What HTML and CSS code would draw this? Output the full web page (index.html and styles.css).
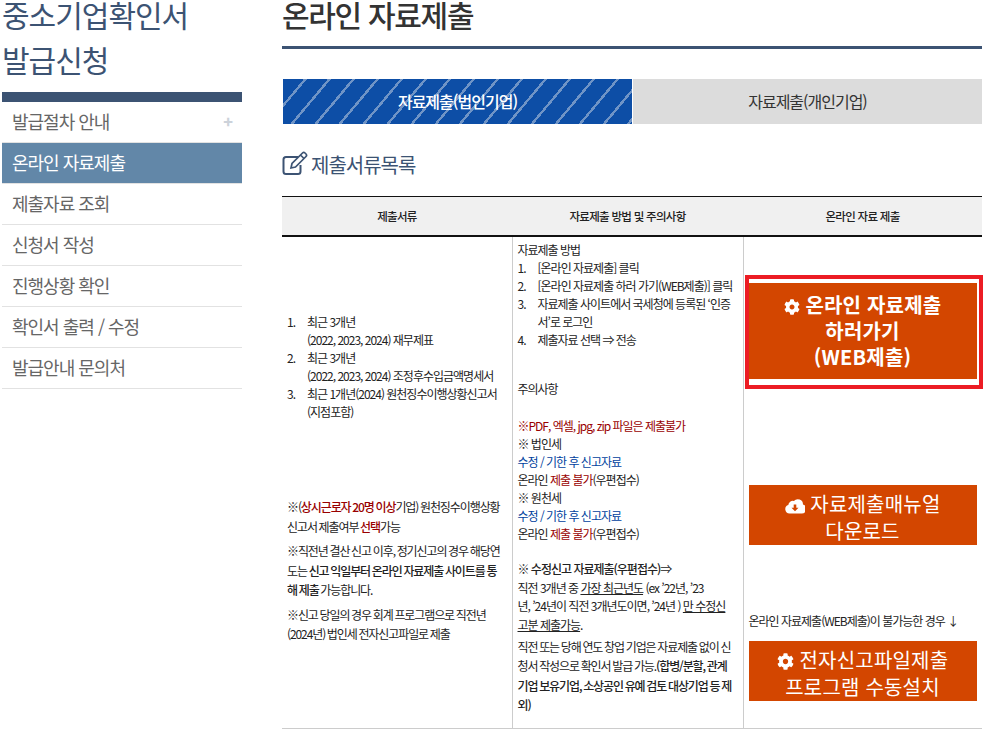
FILE: index.html
```html
<!DOCTYPE html>
<html lang="ko">

<head>
    <meta charset="UTF-8">
    <title>온라인 자료제출</title>
    <link rel="stylesheet" href="styles.css">
</head>

<body>
    <div class="wrap">
        <div class="side">
            <h2 class="sideTitle">중소기업확인서<br>발급신청</h2>
            <ul class="sideNav">
                <li><a>발급절차 안내</a><span class="plus">+</span></li>
                <li class="on"><a>온라인 자료제출</a></li>
                <li><a>제출자료 조회</a></li>
                <li><a>신청서 작성</a></li>
                <li><a>진행상황 확인</a></li>
                <li><a>확인서 출력 / 수정</a></li>
                <li><a>발급안내 문의처</a></li>
            </ul>
        </div>
        <div class="main">
            <h1 class="pageTitle">온라인 자료제출</h1>
            <div class="tabs">
                <a class="tab active">자료제출(법인기업)</a>
                <a class="tab">자료제출(개인기업)</a>
            </div>
            <h3 class="subTitle">
                <svg class="editIcon" width="26" height="24" viewBox="0 0 26 24" fill="none" stroke="#3c5373" stroke-width="2">
                    <path d="M16 6H4a2.500 2.500 0 0 0-2.500 2.500v12A2.500 2.500 0 0 0 4 23h12a2.500 2.500 0 0 0 2.500-2.500V14"/>
                    <path stroke-width="1.700" d="M9 17l1-4.500L20.500 2a1.800 1.800 0 0 1 2.500 0l1 1a1.800 1.800 0 0 1 0 2.500L13.500 16z M18.500 4l3.500 3.500"/>
                </svg>
                제출서류목록
            </h3>
            <table class="docTable">
                <colgroup>
                    <col class="col1">
                    <col class="col2">
                    <col class="col3">
                </colgroup>
                <thead>
                    <tr>
                        <th>제출서류</th>
                        <th>자료제출 방법 및 주의사항</th>
                        <th>온라인 자료 제출</th>
                    </tr>
                </thead>
                <tbody>
                    <tr>
                        <td class="docCell">
                            <ol class="numList">
                                <li>최근 3개년<br>(2022, 2023, 2024) 재무제표</li>
                                <li>최근 3개년<br>(2022, 2023, 2024) 조정후수입금액명세서</li>
                                <li>최근 1개년(2024) 원천징수이행상황신고서<br>(지점포함)</li>
                            </ol>
                            <p class="note firstNote">※(<span class="red mid">상시근로자 20명 이상</span>기업) 원천징수이행상황<br>신고서 제출여부 <span class="red mid">선택</span>가능</p>
                            <p class="note">※직전년 결산 신고 이후, 정기신고의 경우 해당연<br>도는 <span class="mid">신고 익일부터 온라인 자료제출 사이트를 통<br>해 제출</span> 가능합니다.</p>
                            <p class="note">※신고 당일의 경우 회계 프로그램으로 직전년<br>(2024년) 법인세 전자신고파일로 제출</p>
                        </td>
                        <td class="howCell">
                            <div>자료제출 방법</div>
                            <ol class="numList">
                                <li>[온라인 자료제출] 클릭</li>
                                <li>[온라인 자료제출 하러 가기(WEB제출)] 클릭</li>
                                <li>자료제출 사이트에서 국세청에 등록된 ‘인증<br>서’로 로그인</li>
                                <li>제출자료 선택 ⇒ 전송</li>
                            </ol>
                            <div class="warnTitle">주의사항</div>
                            <div class="warnBlock">
                                <div class="red">※PDF, 엑셀, jpg, zip 파일은 제출불가</div>
                                <div>※ 법인세</div>
                                <div class="blue">수정 / 기한 후 신고자료</div>
                                <div>온라인 <span class="red">제출 불가</span>(우편접수)</div>
                                <div>※ 원천세</div>
                                <div class="blue">수정 / 기한 후 신고자료</div>
                                <div>온라인 <span class="red">제출 불가</span>(우편접수)</div>
                            </div>
                            <div class="reviseBlock">
                                <div><span class="mid">※ 수정신고 자료제출(우편접수)</span>⇒</div>
                                <div>직전 3개년 중 <u>가장 최근년도</u> (ex ’22년, ’23<br>년, ’24년이 직전 3개년도이면, ’24년 ) <u>만 수정신<br>고분 제출가능</u>.</div>
                            </div>
                            <p class="note lastNote">직전 또는 당해 연도 창업 기업은 자료제출 없이 신<br>청서 작성으로 확인서 발급 가능.<span class="mid">(합병/분할, 관계<br>기업 보유기업, 소상공인 유예 검토 대상기업 등 제<br>외)</span></p>
                        </td>
                        <td class="btnCell">
                            <div class="outline">
                                <a class="btn btnBig">
                                    <svg class="cog" width="16" height="16" viewBox="0 0 512 512" fill="#fff"><path d="M487.400 315.700l-42.600-24.600c4.300-23.200 4.300-47 0-70.200l42.600-24.600c4.900-2.800 7.100-8.600 5.500-14-11.100-35.600-30-67.800-54.700-94.600-3.800-4.100-10-5.100-14.800-2.300L380.800 110c-17.900-15.400-38.500-27.300-60.800-35.100V25.800c0-5.600-3.900-10.500-9.400-11.700-36.700-8.200-74.300-7.800-109.200 0-5.500 1.200-9.400 6.100-9.400 11.700V75c-22.200 7.900-42.800 19.800-60.800 35.100L88.700 85.500c-4.900-2.800-11-1.900-14.800 2.300-24.700 26.700-43.600 58.900-54.700 94.600-1.700 5.400.6 11.200 5.500 14L67.300 221c-4.300 23.200-4.300 47 0 70.200l-42.600 24.600c-4.900 2.800-7.100 8.600-5.500 14 11.100 35.600 30 67.800 54.700 94.600 3.800 4.100 10 5.100 14.800 2.300l42.600-24.600c17.900 15.400 38.500 27.300 60.800 35.100v49.200c0 5.600 3.900 10.500 9.400 11.700 36.700 8.200 74.300 7.800 109.200 0 5.500-1.200 9.400-6.100 9.400-11.700v-49.200c22.200-7.900 42.800-19.800 60.800-35.100l42.600 24.600c4.900 2.800 11 1.900 14.800-2.300 24.700-26.700 43.600-58.900 54.700-94.600 1.500-5.500-.7-11.300-5.600-14.100zM256 336c-44.100 0-80-35.900-80-80s35.900-80 80-80 80 35.900 80 80-35.900 80-80 80z"/></svg>
                                    온라인 자료제출<br>하러가기<br>(WEB제출)
                                </a>
                            </div>
                            <a class="btn manualBtn">
                                <svg class="cloud" width="20" height="16" viewBox="0 0 20 16"><path fill="#fff" d="M4.500 15.500A4.300 4.300 0 0 1 3.300 7.100 4.600 4.600 0 0 1 8.900 3 5.200 5.200 0 0 1 18 6.500a4.600 4.600 0 0 1-1.500 9z"/><path fill="#d34600" d="M8.700 6.500h2.600v3.300h2.200L10 13.300 6.500 9.800h2.200z"/></svg>
                                자료제출매뉴얼<br>다운로드
                            </a>
                            <p class="webNote">온라인 자료제출(WEB제출)이 불가능한 경우 ↓</p>
                            <a class="btn">
                                <svg class="cog" width="17" height="17" viewBox="0 0 512 512" fill="#fff"><path d="M487.400 315.700l-42.600-24.600c4.300-23.200 4.300-47 0-70.200l42.600-24.600c4.900-2.800 7.100-8.600 5.500-14-11.100-35.600-30-67.800-54.700-94.600-3.800-4.100-10-5.100-14.800-2.300L380.800 110c-17.900-15.400-38.500-27.300-60.800-35.100V25.800c0-5.600-3.900-10.500-9.400-11.700-36.700-8.200-74.300-7.800-109.200 0-5.500 1.200-9.400 6.100-9.400 11.700V75c-22.200 7.900-42.800 19.800-60.800 35.100L88.700 85.500c-4.900-2.800-11-1.900-14.800 2.300-24.700 26.700-43.600 58.900-54.700 94.600-1.700 5.400.6 11.200 5.500 14L67.300 221c-4.300 23.200-4.300 47 0 70.200l-42.600 24.600c-4.900 2.800-7.100 8.600-5.500 14 11.100 35.600 30 67.800 54.700 94.600 3.800 4.100 10 5.100 14.800 2.300l42.600-24.600c17.900 15.400 38.500 27.300 60.800 35.100v49.200c0 5.600 3.900 10.500 9.400 11.700 36.700 8.200 74.300 7.800 109.200 0 5.500-1.200 9.400-6.100 9.400-11.700v-49.200c22.200-7.900 42.800-19.800 60.800-35.100l42.600 24.600c4.900 2.800 11 1.900 14.800-2.300 24.700-26.700 43.600-58.900 54.700-94.600 1.500-5.500-.7-11.300-5.600-14.100zM256 336c-44.100 0-80-35.900-80-80s35.900-80 80-80 80 35.900 80 80-35.900 80-80 80z"/></svg>
                                전자신고파일제출<br>프로그램 수동설치
                            </a>
                        </td>
                    </tr>
                </tbody>
            </table>
        </div>
    </div>
</body>

</html>
```

FILE: styles.css
```css
html,
body {
    margin: 0;
    padding: 0;
}

body {
    font-family: "Noto Sans CJK KR", "Noto Sans", sans-serif;
    color: #333333;
    overflow: hidden;
    height: 733px;
}

.wrap {
    display: flex;
    gap: 40px;
    padding-left: 2px;
}

.side {
    width: 240px;
    flex-shrink: 0;
}

.sideTitle {
    margin: -8px 0 0 0;
    font-size: 30px;
    line-height: 45px;
    font-weight: 400;
    letter-spacing: -1px;
    color: #3c5373;
}

.sideNav {
    list-style: none;
    margin: 10px 0 0 0;
    padding: 0;
    border-top: 10px solid #3c5373;
}

.sideNav li {
    display: flex;
    justify-content: space-between;
    align-items: center;
    height: 38px;
    padding: 0 10px 2px 10px;
    border-bottom: 1px solid #e2e2e2;
    font-size: 18px;
    line-height: 38px;
    letter-spacing: -1px;
    color: #666666;
}

.sideNav li.on {
    background-color: #6287a8;
    color: #ffffff;
}

.plus {
    color: #ccd2da;
    font-weight: 900;
    font-size: 16px;
}

.main {
    width: 700px;
}

.pageTitle {
    margin: -8px 0 0 0;
    height: 54px;
    border-bottom: 3px solid #3c5373;
    font-size: 30px;
    line-height: 45px;
    font-weight: 500;
    letter-spacing: -1.300px;
    color: #333333;
}

.tabs {
    display: flex;
    gap: 1px;
    margin: 30px 0 0 1px;
}

.tab {
    flex: 1;
    height: 45px;
    line-height: 44px;
    text-align: center;
    font-size: 16px;
    letter-spacing: -1px;
    background-color: #dcdcdc;
    color: #333333;
}

.tab.active {
    color: #ffffff;
    font-weight: 500;
    background-color: #0d4ea6;
    background-image: repeating-linear-gradient(130deg, transparent 0, transparent 16px, #6f94c6 16px, #6f94c6 18.400px);
}

.subTitle {
    display: flex;
    align-items: center;
    gap: 3px;
    margin: 26px 0 0 0;
    height: 28px;
    font-size: 20px;
    font-weight: 400;
    letter-spacing: -1px;
    color: #3c5373;
}

.editIcon {
    margin-top: -3px;
}

.docTable {
    width: 700px;
    margin-top: 18px;
    border-collapse: collapse;
    table-layout: fixed;
    font-size: 12px;
    line-height: 18px;
    letter-spacing: -1px;
    color: #222222;
    border-top: 1px solid #111111;
    border-bottom: 1px solid #cccccc;
}

.col1 {
    width: 230px;
}

.col2 {
    width: 231px;
}

.docTable th {
    height: 38px;
    padding: 0;
    background-color: #f0f0f0;
    border-bottom: 2px solid #111111;
    font-size: 11.500px;
    font-weight: 500;
    letter-spacing: -0.700px;
}

.docTable td {
    box-sizing: border-box;
    height: 492px;
    border-left: 1px solid #cccccc;
    vertical-align: top;
    padding: 4px 5px 0 5px;
}

.docTable td:first-child {
    border-left: 0;
}

.docTable td.docCell {
    padding-top: 76px;
}

.numList {
    list-style: none;
    counter-reset: num;
    margin: 0;
    padding: 0 0 0 20px;
}

.numList li {
    counter-increment: num;
}

.numList li::before {
    content: counter(num) ".";
    display: inline-block;
    width: 20px;
    margin-left: -20px;
}

.note {
    margin: 5px 0 0 0;
    line-height: 19.500px;
    letter-spacing: -1.100px;
    word-spacing: -0.500px;
}

.firstNote {
    margin-top: 76px;
}

.lastNote {
    margin-top: 2px;
}

.warnTitle {
    margin-top: 31px;
}

.warnBlock {
    margin-top: 19px;
}

.reviseBlock {
    margin-top: 17px;
    line-height: 18.700px;
}

.mid {
    font-weight: 500;
}

.red {
    color: #990000;
}

.blue {
    color: #003f9e;
}

.docTable td.btnCell {
    padding: 38px 5px 0 5px;
}

.outline {
    box-sizing: border-box;
    width: 238px;
    margin-left: -4px;
    padding: 4px 0 6px 0;
    border: 4px solid #ec1c24;
}

.btn {
    box-sizing: border-box;
    display: block;
    width: 228px;
    height: 60px;
    padding-top: 5px;
    background-color: #d34600;
    color: #ffffff;
    text-align: center;
    font-size: 20px;
    line-height: 27px;
    letter-spacing: 0.200px;
}

.btnBig {
    height: 96px;
    padding-top: 9px;
    font-weight: 700;
    line-height: 26px;
}

.manualBtn {
    margin-top: 96px;
}

.webNote {
    margin: 67px 0 11px 0;
    white-space: nowrap;
}

.cog,
.cloud {
    vertical-align: -2px;
}
```
